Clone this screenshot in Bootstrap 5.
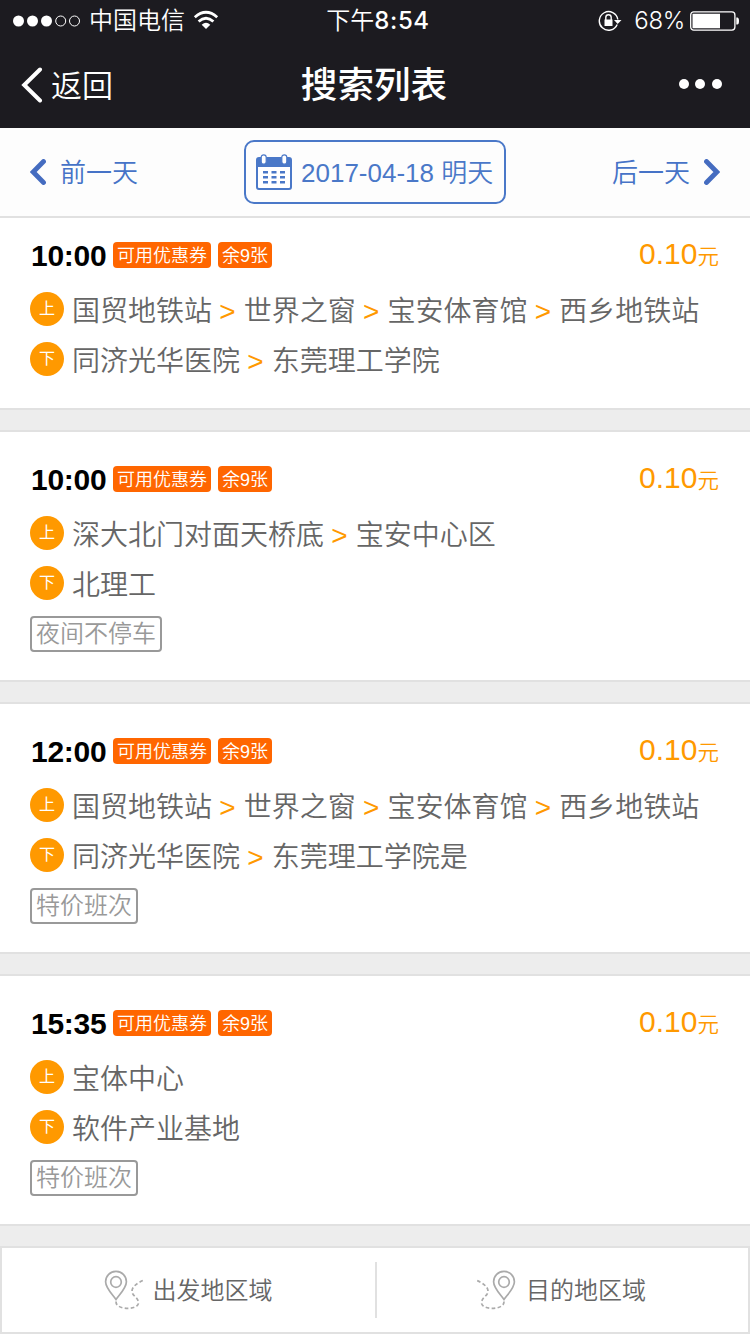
<!DOCTYPE html>
<html lang="zh-CN">
<head>
<meta charset="utf-8">
<meta name="viewport" content="width=device-width, initial-scale=1">
<title>搜索列表</title>
<link href="https://cdn.jsdelivr.net/npm/bootstrap@5.3.0/dist/css/bootstrap.min.css" rel="stylesheet">
<style>
body{font-family:"Liberation Sans","Noto Sans CJK SC",sans-serif;background:#ededed;color:#666;width:750px;height:1334px;overflow:hidden;font-weight:350;line-height:1}
svg{display:block;flex:none}
.topbar{background:#1c1b20;color:#fff;height:128px}
.status{height:41px;padding:0 10px 0 13px;font-size:24px}
.status>div,.titlebar>div{flex:1 1 0}
.status .clock,.titlebar h1{flex:none}
.clock{font-size:24px;padding:1px 0 0 3px}
.clock b{font-family:Inter,sans-serif;font-weight:500;letter-spacing:.6px}
.pct{font-family:Inter,sans-serif;font-weight:300;font-size:24px;letter-spacing:-.3px;padding-top:1px}
.titlebar{height:87px;padding:0 27px 0 21px}
.titlebar h1{font-size:36.6px;font-weight:500;padding:2px 0 0 4px}
.back{font-size:31px}
.back span{padding-top:3px}
.daybar{height:90px;background:#fdfdfd;border-bottom:2px solid #e1e1e1;color:#4673c7;padding:0 30px;font-size:26px}
.daybar span{padding-top:2px}
.daybox{width:262px;height:64px;border:2px solid #4a78c8;border-radius:10px;color:#4a78c8;padding-left:10px}
.trip{background:#fff;border-top:2px solid #e1e1e1;border-bottom:2px solid #e1e1e1;padding:18px 30px 24px;margin-bottom:20px}
.trip-first{border-top:0;padding-top:8px}
.trip-head{height:58px}
.time{font-size:30px;font-weight:700;color:#000;width:76px;margin-right:7px;padding:2px 0 0 1px;letter-spacing:-.25px}
.flag{background:#f60;color:#fff;font-size:18px;height:26px;padding:0 4px;border-radius:4px;margin-right:7px;line-height:28px}
.price{color:#f90;font-size:30px;margin-right:1px;padding-bottom:2px}
.price small{font-size:21.5px}
.stops{height:50px;font-size:28px;white-space:pre}
.stops .names{padding-top:6px}
.stops i{font-style:normal;color:#f90;font-weight:400;margin-left:-.5px;margin-right:.3px}
.dot{width:34px;height:34px;border-radius:50%;background:#f90;color:#fff;font-size:16px;margin-right:8px;font-weight:400}
.note{height:36px;border:2px solid #999;border-radius:4px;color:#999;font-size:24px;padding:0 4px;margin:8px 0 4px}
.filter{height:88px;background:#fff;border:2px solid #e1e1e1;font-size:24px}
.filter .rule{width:2px;height:56px;background:#e1e1e1;flex:none}
.filter .area{flex:1 1 0;padding-right:2px}
.filter .area-from{flex:0 0 373px;padding-right:1px}
.filter span{padding-top:2px;margin-left:9px}
</style>
</head>
<body>
<header class="topbar">
  <div class="status d-flex align-items-center">
    <div class="d-flex align-items-center">
      <svg width="68" height="12" viewBox="0 0 68 12"><g fill="#fff"><circle cx="5.5" cy="6" r="5.5"/><circle cx="19.5" cy="6" r="5.5"/><circle cx="33.5" cy="6" r="5.5"/></g><g fill="none" stroke="#fff"><circle cx="47.7" cy="6" r="5"/><circle cx="61.5" cy="6" r="5"/></g></svg>
      <span class="ms-2" style="padding-top:1px">中国电信</span>
      <svg class="ms-2" style="margin-top:-1px" width="26" height="20" viewBox="0 0 26 20"><g fill="none" stroke="#fff" stroke-width="2.8"><path d="M1.8 7.2Q13 -2.6 24.2 7.2"/><path d="M5.6 11.5Q13 4.9 20.4 11.5"/></g><path d="M8.7 14.7Q13 11 17.3 14.700L13 19z" fill="#fff"/></svg>
    </div>
    <div class="clock">下午<b>8:54</b></div>
    <div class="d-flex align-items-center justify-content-end">
      <svg width="24" height="22" viewBox="0 0 24 22"><path d="M19.2 14.5A9.3 9.3 0 1 1 19.8 9.5" fill="none" stroke="#fff" stroke-width="1.4"/><path d="M16 10h7.500l-3.800 4z" fill="#fff"/><path d="M6.500 9.500h8v6.500h-8z" fill="#fff"/><path d="M7.800 10V7.500a2.700 2.700 0 0 1 5.400 0V10" fill="none" stroke="#fff" stroke-width="1.4"/></svg>
      <span class="pct" style="margin-left:12px;margin-right:5px">68%</span>
      <svg width="50" height="20" viewBox="0 0 50 20"><rect x=".7" y=".9" width="44.2" height="18.2" rx="3" fill="none" stroke="#fff" stroke-width="1.3"/><path d="M2.500 2.700h27.500v14.600H2.500zM46.300 6.500h1q1.700 0 1.700 3.500t-1.700 3.500h-1z" fill="#fff"/></svg>
    </div>
  </div>
  <div class="titlebar d-flex align-items-center">
    <div class="d-flex align-items-center back">
      <svg width="22" height="36" viewBox="0 0 22 36"><path d="M19 2.500L3.200 18 19 33.500" fill="none" stroke="#fff" stroke-width="4" stroke-linecap="round"/></svg>
      <span class="ms-2">返回</span>
    </div>
    <h1 class="m-0">搜索列表</h1>
    <div class="d-flex justify-content-end"><svg style="margin-top:-1px" width="44" height="10" viewBox="0 0 44 10" fill="#fff"><circle cx="5" cy="5" r="5"/><circle cx="21" cy="5" r="5"/><circle cx="38" cy="5" r="5"/></svg></div>
  </div>
</header>
<nav class="daybar d-flex align-items-center justify-content-between">
  <div class="d-flex align-items-center"><svg width="16" height="26" viewBox="0 0 16 26"><path d="M13.500 2.500L3.200 13 13.500 23.500" fill="none" stroke="#456cc0" stroke-width="4.8" stroke-linecap="round"/></svg><span style="margin-left:14px">前一天</span></div>
  <div class="daybox d-flex align-items-center">
    <svg width="36" height="36" viewBox="0 0 36 36"><rect x="1" y="4" width="34" height="31" rx="2" fill="#fff" stroke="#4a78c8" stroke-width="2"/><path d="M1 4h34v9H1z" fill="#4a78c8"/><g fill="#fff" stroke="#4a78c8" stroke-width="1.2"><rect x="5.2" y=".8" width="5" height="9.4" rx="2.5"/><rect x="25.8" y=".8" width="5" height="9.4" rx="2.5"/></g><path d="M7 18.300h22M7 23.300h22M7 28.300h22" stroke="#4a78c8" stroke-width="2.6" stroke-dasharray="5 3.5"/></svg>
    <span class="text-nowrap" style="margin-left:9px">2017-04-18 明天</span>
  </div>
  <div class="d-flex align-items-center"><span style="margin-right:14px">后一天</span><svg width="16" height="26" viewBox="0 0 16 26"><path d="M2.500 2.500L12.800 13 2.500 23.500" fill="none" stroke="#456cc0" stroke-width="4.8" stroke-linecap="round"/></svg></div>
</nav>
<main>
  <section class="trip trip-first">
    <div class="trip-head d-flex align-items-center"><span class="time">10:00</span><span class="flag">可用优惠券</span><span class="flag">余9张</span><span class="price ms-auto">0.10<small>元</small></span></div>
    <div class="stops d-flex align-items-center"><span class="dot d-flex align-items-center justify-content-center">上</span><span class="names">国贸地铁站<i> &gt; </i>世界之窗<i> &gt; </i>宝安体育馆<i> &gt; </i>西乡地铁站</span></div>
    <div class="stops d-flex align-items-center"><span class="dot d-flex align-items-center justify-content-center">下</span><span class="names">同济光华医院<i> &gt; </i>东莞理工学院</span></div>
  </section>
  <section class="trip">
    <div class="trip-head d-flex align-items-center"><span class="time">10:00</span><span class="flag">可用优惠券</span><span class="flag">余9张</span><span class="price ms-auto">0.10<small>元</small></span></div>
    <div class="stops d-flex align-items-center"><span class="dot d-flex align-items-center justify-content-center">上</span><span class="names">深大北门对面天桥底<i> &gt; </i>宝安中心区</span></div>
    <div class="stops d-flex align-items-center"><span class="dot d-flex align-items-center justify-content-center">下</span><span class="names">北理工</span></div>
    <div class="d-flex"><span class="note d-flex align-items-center">夜间不停车</span></div>
  </section>
  <section class="trip">
    <div class="trip-head d-flex align-items-center"><span class="time">12:00</span><span class="flag">可用优惠券</span><span class="flag">余9张</span><span class="price ms-auto">0.10<small>元</small></span></div>
    <div class="stops d-flex align-items-center"><span class="dot d-flex align-items-center justify-content-center">上</span><span class="names">国贸地铁站<i> &gt; </i>世界之窗<i> &gt; </i>宝安体育馆<i> &gt; </i>西乡地铁站</span></div>
    <div class="stops d-flex align-items-center"><span class="dot d-flex align-items-center justify-content-center">下</span><span class="names">同济光华医院<i> &gt; </i>东莞理工学院是</span></div>
    <div class="d-flex"><span class="note d-flex align-items-center">特价班次</span></div>
  </section>
  <section class="trip">
    <div class="trip-head d-flex align-items-center"><span class="time">15:35</span><span class="flag">可用优惠券</span><span class="flag">余9张</span><span class="price ms-auto">0.10<small>元</small></span></div>
    <div class="stops d-flex align-items-center"><span class="dot d-flex align-items-center justify-content-center">上</span><span class="names">宝体中心</span></div>
    <div class="stops d-flex align-items-center"><span class="dot d-flex align-items-center justify-content-center">下</span><span class="names">软件产业基地</span></div>
    <div class="d-flex"><span class="note d-flex align-items-center">特价班次</span></div>
  </section>
</main>
<footer class="filter d-flex align-items-center">
  <div class="area area-from d-flex align-items-center justify-content-center">
    <svg width="40" height="40" viewBox="0 0 40 40" fill="none" stroke="#aaa" stroke-width="1.7"><path d="M12 29.500C8 24 1.600 18 1.600 11.800a10.400 10.400 0 0 1 20.800 0C22.400 18 16 24 12 29.500z"/><circle cx="12" cy="12" r="5.3"/><path d="M12 31.500c-.5 9 23 9 22.500 1C34 27 28 26 28 21c0-4 5-8 11-10.500" stroke-dasharray="3.6 2.4"/></svg>
    <span>出发地区域</span>
  </div>
  <div class="rule"></div>
  <div class="area d-flex align-items-center justify-content-center">
    <svg width="40" height="40" viewBox="0 0 40 40" fill="none" stroke="#aaa" stroke-width="1.7"><g transform="matrix(-1 0 0 1 39 0)"><path d="M12 29.500C8 24 1.600 18 1.600 11.800a10.400 10.400 0 0 1 20.800 0C22.400 18 16 24 12 29.500z"/><circle cx="12" cy="12" r="5.3"/><path d="M12 31.500c-.5 9 23 9 22.500 1C34 27 28 26 28 21c0-4 5-8 11-10.500" stroke-dasharray="3.6 2.4"/></g></svg>
    <span>目的地区域</span>
  </div>
</footer>
<script src="https://cdn.jsdelivr.net/npm/bootstrap@5.3.0/dist/js/bootstrap.bundle.min.js"></script>
</body>
</html>
